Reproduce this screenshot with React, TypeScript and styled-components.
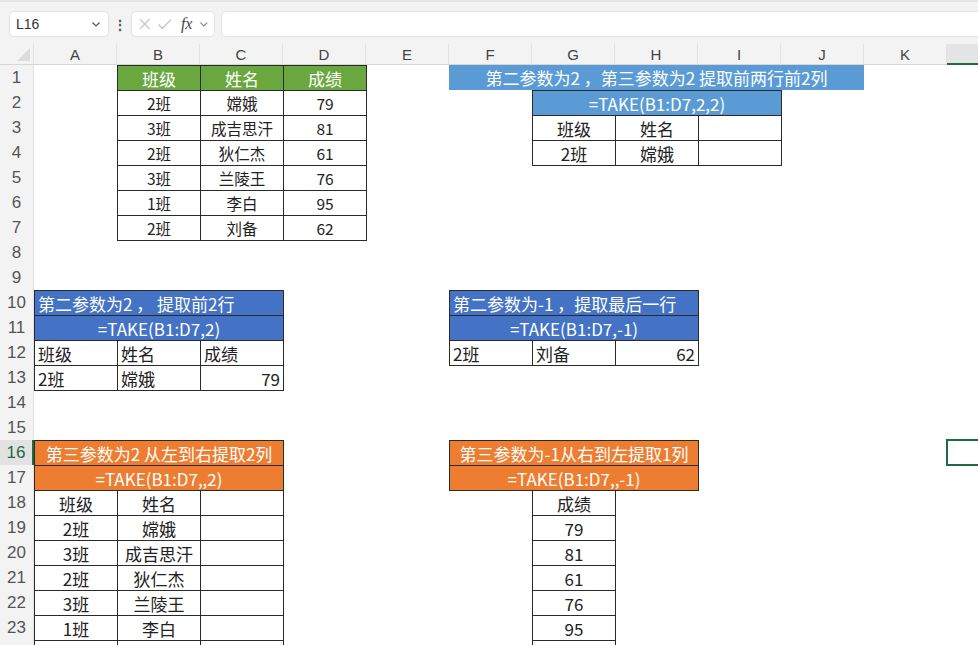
import React from "react";
import styled, { createGlobalStyle } from "styled-components";

const GlobalStyle = createGlobalStyle`
  html, body {
    margin: 0;
    padding: 0;
    background: #ffffff;
    font-family: "Noto Sans CJK SC", "Noto Sans", sans-serif;
    overflow: hidden;
  }
`;

const COL = 83;
const ROW = 25;
const COLS = ["A", "B", "C", "D", "E", "F", "G", "H", "I", "J", "K", "L"];
const ROWS = 24;

const Page = styled.div`
  width: 978px;
  height: 645px;
  overflow: hidden;
  background: #fff;
`;

const Toolbar = styled.div`
  height: 44px;
  box-sizing: border-box;
  padding: 9px 0 0 9px;
  display: flex;
  align-items: flex-start;
  gap: 6px;
  background: #f3f3f3;
  border-top: 2px solid #e6e6e6;
`;

const NameBox = styled.div`
  width: 100px;
  height: 26px;
  box-sizing: border-box;
  background: #fff;
  border: 1px solid #e3e3e3;
  border-radius: 5px;
  display: flex;
  align-items: center;
  justify-content: space-between;
  padding: 0 6px 0 6px;
  font-family: "Liberation Sans", sans-serif;
  font-size: 14px;
  color: #333;
`;

const Dots = styled.div`
  width: 10px;
  height: 26px;
  display: flex;
  align-items: center;
  justify-content: center;
  color: #555;
  font-size: 14px;
  font-weight: bold;
`;

const FnBox = styled.div`
  width: 84px;
  height: 26px;
  box-sizing: border-box;
  background: #fff;
  border: 1px solid #e3e3e3;
  border-radius: 5px;
  display: flex;
  align-items: center;
  gap: 6px;
  padding: 0 4px 0 6px;
  color: #c4c4c4;
`;

const Fx = styled.span`
  font-family: "Liberation Serif", serif;
  font-style: italic;
  font-size: 16px;
  color: #444;
  margin-left: 2px;
`;

const FormulaInput = styled.div`
  flex: 1;
  height: 26px;
  box-sizing: border-box;
  background: #fff;
  border: 1px solid #e3e3e3;
  border-right: none;
  border-radius: 5px 0 0 5px;
`;

const Sheet = styled.div`
  display: grid;
  grid-template-columns: 34px repeat(${COLS.length}, ${COL}px);
  grid-template-rows: 21px repeat(${ROWS}, ${ROW}px);
  background: #fff;
`;

const Corner = styled.div`
  grid-row: 1;
  grid-column: 1;
  background: #f3f3f3;
  border-right: 1px solid #e2e2e2;
  border-bottom: 1px solid #d6d6d6;
  position: relative;
  &::after {
    content: "";
    position: absolute;
    right: 3px;
    bottom: 3px;
    border-left: 13px solid transparent;
    border-bottom: 13px solid #dcdcdc;
  }
`;

const ColHead = styled.div<{ $col: number; $active?: boolean }>`
  grid-row: 1;
  grid-column: ${(p) => p.$col + 2};
  background: ${(p) => (p.$active ? "#e4e4e4" : "#f3f3f3")};
  border-right: 1px solid #e2e2e2;
  border-bottom: ${(p) => (p.$active ? "2px solid #1e6c41" : "1px solid #d6d6d6")};
  display: flex;
  align-items: center;
  justify-content: center;
  font-family: "Liberation Sans", sans-serif;
  font-size: 15px;
  color: #444;
`;

const RowHead = styled.div<{ $row: number; $active?: boolean }>`
  grid-column: 1;
  grid-row: ${(p) => p.$row + 1};
  background: ${(p) => (p.$active ? "#e2e2e2" : "#f3f3f3")};
  border-right: ${(p) => (p.$active ? "2px solid #1e6c41" : "1px solid #e2e2e2")};
  display: flex;
  align-items: center;
  justify-content: center;
  font-family: "Liberation Sans", sans-serif;
  font-size: 17px;
  color: ${(p) => (p.$active ? "#1e6c41" : "#555")};
`;

type Align = "left" | "center" | "right";

const Cell = styled.div<{
  $row: number;
  $col: number;
  $span?: number;
  $bg?: string;
  $color?: string;
  $align?: Align;
  $border?: boolean;
  $size?: number;
}>`
  grid-row: ${(p) => p.$row + 1};
  grid-column: ${(p) => p.$col + 2} / span ${(p) => p.$span || 1};
  background: ${(p) => p.$bg || "#fff"};
  color: ${(p) => p.$color || "#222"};
  border: ${(p) => (p.$border ? "1px solid #2a2a2a" : "none")};
  margin: ${(p) => (p.$border ? "0 -1px -1px 0" : "0")};
  display: flex;
  align-items: center;
  justify-content: ${(p) =>
    p.$align === "left" ? "flex-start" : p.$align === "right" ? "flex-end" : "center"};
  padding: 0 3px;
  font-size: ${(p) => p.$size || 17}px;
  white-space: nowrap;
  overflow: hidden;
  z-index: 1;
`;

const Selected = styled.div<{ $row: number; $col: number }>`
  grid-row: ${(p) => p.$row + 1};
  grid-column: ${(p) => p.$col + 2};
  border: 2px solid #1e6c41;
  margin: -1px 0 -1px -1px;
  z-index: 2;
`;

type C = {
  r: number;
  c: number;
  text?: string;
  span?: number;
  bg?: string;
  color?: string;
  align?: Align;
  border?: boolean;
  size?: number;
};

const GREEN = "#6aa73e";
const SKY = "#5b9bd5";
const BLUE = "#4472c4";
const ORANGE = "#ed7d31";

const cells: C[] = [];
const add = (c: C) => cells.push(c);

// source table B1:D7
["班级", "姓名", "成绩"].forEach((t, i) =>
  add({ r: 1, c: 1 + i, text: t, bg: GREEN, color: "#fff", border: true })
);
const source = [
  ["2班", "嫦娥", "79"],
  ["3班", "成吉思汗", "81"],
  ["2班", "狄仁杰", "61"],
  ["3班", "兰陵王", "76"],
  ["1班", "李白", "95"],
  ["2班", "刘备", "62"],
];
source.forEach((row, ri) =>
  row.forEach((t, ci) =>
    add({ r: 2 + ri, c: 1 + ci, text: t, border: true, size: 15.5 })
  )
);

// top right
add({ r: 1, c: 5, span: 5, text: "第二参数为2 ，第三参数为2 提取前两行前2列", bg: SKY, color: "#fff" });
add({ r: 2, c: 6, span: 3, text: "=TAKE(B1:D7,2,2)", bg: SKY, color: "#fff", border: true });
[["班级", "姓名", ""], ["2班", "嫦娥", ""]].forEach((row, ri) =>
  row.forEach((t, ci) => add({ r: 3 + ri, c: 6 + ci, text: t, border: true }))
);

// middle left
add({ r: 10, c: 0, span: 3, text: "第二参数为2 ， 提取前2行", bg: BLUE, color: "#fff", align: "left", border: true });
add({ r: 11, c: 0, span: 3, text: "=TAKE(B1:D7,2)", bg: BLUE, color: "#fff", border: true });
[["班级", "姓名", "成绩"], ["2班", "嫦娥", "79"]].forEach((row, ri) =>
  row.forEach((t, ci) =>
    add({ r: 12 + ri, c: ci, text: t, border: true, align: ri === 1 && ci === 2 ? "right" : "left" })
  )
);

// middle right
add({ r: 10, c: 5, span: 3, text: "第二参数为-1 ，提取最后一行", bg: BLUE, color: "#fff", align: "left", border: true });
add({ r: 11, c: 5, span: 3, text: "=TAKE(B1:D7,-1)", bg: BLUE, color: "#fff", border: true });
["2班", "刘备", "62"].forEach((t, ci) =>
  add({ r: 12, c: 5 + ci, text: t, border: true, align: ci === 2 ? "right" : "left" })
);

// bottom left
add({ r: 16, c: 0, span: 3, text: "第三参数为2 从左到右提取2列", bg: ORANGE, color: "#fff", border: true });
add({ r: 17, c: 0, span: 3, text: "=TAKE(B1:D7,,2)", bg: ORANGE, color: "#fff", border: true });
[["班级", "姓名"], ...source.map((s) => [s[0], s[1]])].forEach((row, ri) => {
  row.forEach((t, ci) => add({ r: 18 + ri, c: ci, text: t, border: true }));
  add({ r: 18 + ri, c: 2, text: "", border: true });
});

// bottom right
add({ r: 16, c: 5, span: 3, text: "第三参数为-1从右到左提取1列", bg: ORANGE, color: "#fff", border: true });
add({ r: 17, c: 5, span: 3, text: "=TAKE(B1:D7,,-1)", bg: ORANGE, color: "#fff", border: true });
["成绩", ...source.map((s) => s[2])].forEach((t, ri) =>
  add({ r: 18 + ri, c: 6, text: t, border: true })
);

const Chevron = ({ color = "#555" }: { color?: string }) => (
  <svg width="12" height="12" viewBox="0 0 12 12">
    <path d="M2.5 4.5 L6 8 L9.5 4.5" fill="none" stroke={color} strokeWidth="1.2" />
  </svg>
);

export default function App() {
  return (
    <Page>
      <GlobalStyle />
      <Toolbar>
        <NameBox>
          <span>L16</span>
          <Chevron />
        </NameBox>
        <Dots>⋮</Dots>
        <FnBox>
          <svg width="14" height="14" viewBox="0 0 14 14">
            <path d="M2 2 L12 12 M12 2 L2 12" stroke="#bdbdbd" strokeWidth="1.2" />
          </svg>
          <svg width="16" height="14" viewBox="0 0 16 14">
            <path d="M1.5 7.5 L5.5 11.5 L14.5 2.5" fill="none" stroke="#bdbdbd" strokeWidth="1.2" />
          </svg>
          <Fx>fx</Fx>
          <Chevron color="#888" />
        </FnBox>
        <FormulaInput />
      </Toolbar>
      <Sheet>
        <Corner />
        {COLS.map((l, i) => (
          <ColHead key={l} $col={i} $active={l === "L"}>
            {l}
          </ColHead>
        ))}
        {Array.from({ length: ROWS }, (_, i) => (
          <RowHead key={i} $row={i + 1} $active={i + 1 === 16}>
            {i + 1}
          </RowHead>
        ))}
        {cells.map((c, i) => (
          <Cell
            key={i}
            $row={c.r}
            $col={c.c}
            $span={c.span}
            $bg={c.bg}
            $color={c.color}
            $align={c.align}
            $border={c.border}
            $size={c.size}
          >
            {c.text}
          </Cell>
        ))}
        <Selected $row={16} $col={11} />
      </Sheet>
    </Page>
  );
}
